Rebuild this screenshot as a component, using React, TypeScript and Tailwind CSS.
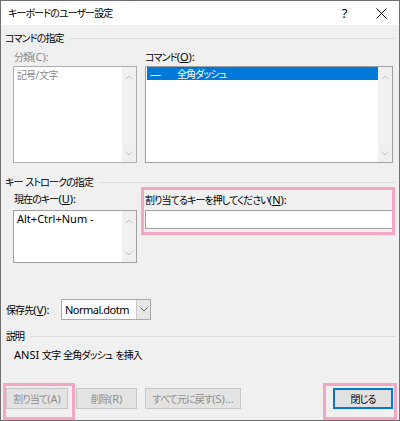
import React from "react";

const FONT = '"Noto Sans", "Noto Sans CJK JP", sans-serif';

function T({ s }: { s: string }) {
  const parts = s.split(/([\u3000-\u30ff\u4e00-\u9fff\uff00-\uffef]+)/);
  return (
    <>
      {parts.map((p, i) =>
        p === "" ? null : /[\u3000-\u30ff\u4e00-\u9fff\uff00-\uffef]/.test(p) ? (
          <span key={i} className="text-[10px] tracking-[-0.9px]">
            {p}
          </span>
        ) : (
          <span key={i}>{p}</span>
        )
      )}
    </>
  );
}

function Chevron({ dir, color = "#c2c2c2" }: { dir: "up" | "down"; color?: string }) {
  return (
    <svg width="8" height="5" viewBox="0 0 8 5" className="block">
      {dir === "up" ? (
        <polyline points="0.5,4.5 4,1 7.5,4.5" fill="none" stroke={color} strokeWidth="1" />
      ) : (
        <polyline points="0.5,0.5 4,4 7.5,0.5" fill="none" stroke={color} strokeWidth="1" />
      )}
    </svg>
  );
}

function ScrollBar() {
  return (
    <div className="w-[14px] bg-[#f0f0f0] flex flex-col items-center justify-between pt-[8px] pb-[6px]">
      <Chevron dir="up" />
      <Chevron dir="down" />
    </div>
  );
}

function GroupHeader({ label, className = "" }: { label: string; className?: string }) {
  return (
    <div className={"flex items-center h-[16px] " + className}>
      <span className="whitespace-nowrap">
        <T s={label} />
      </span>
      <div className="flex-1 h-px bg-[#dcdcdc] ml-[6px]" />
    </div>
  );
}

function Btn({ label, w, def = false }: { label: string; w: string; def?: boolean }) {
  return (
    <div
      className={
        "h-[21px] flex items-center justify-center whitespace-nowrap " +
        w +
        (def
          ? " bg-[#e1e1e1] border-2 border-[#0078d7] text-black"
          : " bg-[#e3e3e3] border border-[#c6c6c6] text-[#8f8f8f]")
      }
    >
      <T s={label} />
    </div>
  );
}

export default function App() {
  return (
    <div
      className="relative w-[400px] h-[421px] border border-[#707070] bg-[#f0f0f0] flex flex-col overflow-hidden text-[11px] leading-[16px] text-black [font-feature-settings:'palt']"
      style={{ fontFamily: FONT }}
    >
      {/* Title bar */}
      <div className="h-[24px] bg-white flex items-center shrink-0">
        <span className="pl-[7px]">
          <T s="キーボードのユーザー設定" />
        </span>
        <div className="ml-auto flex h-full">
          <div className="w-[37px] flex items-center justify-center text-[13px]">?</div>
          <div className="w-[36px] flex items-center justify-center">
            <svg width="11" height="11" viewBox="0 0 11 11">
              <line x1="0.5" y1="0.5" x2="10.5" y2="10.5" stroke="#000" strokeWidth="1" />
              <line x1="10.5" y1="0.5" x2="0.5" y2="10.5" stroke="#000" strokeWidth="1" />
            </svg>
          </div>
        </div>
      </div>

      {/* Body */}
      <div className="flex-1 flex flex-col px-[4px]">
        <GroupHeader label="コマンドの指定" className="mt-[5px]" />

        <div className="flex gap-[8px] ml-[8px] mt-[3px]">
          <div className="w-[124px] flex flex-col">
            <span className="text-[#8a8a8a] pl-[1px]">
              <T s="分類(C):" />
            </span>
            <div className="mt-[1px] h-[97px] border border-[#adadad] bg-white flex">
              <div className="flex-1 pl-[3px] pt-[1px] text-[#8a8a8a] leading-[14px]">
                <T s="記号/文字" />
              </div>
              <ScrollBar />
            </div>
          </div>
          <div className="w-[248px] flex flex-col">
            <span>
              <T s="コマンド" />(<span className="underline">O</span>):
            </span>
            <div className="mt-[1px] h-[97px] border border-[#a0a0a0] bg-white flex">
              <div className="flex-1 pl-[1px]">
                <div className="h-[13px] bg-[#0078d7] text-white flex items-center leading-[13px]">
                  <span className="pl-[3px] w-[30px]">—</span>
                  <span>
                    <T s="全角ダッシュ" />
                  </span>
                </div>
              </div>
              <ScrollBar />
            </div>
          </div>
        </div>

        <GroupHeader label="キー ストロークの指定" className="mt-[11px]" />

        <div className="flex gap-[8px] ml-[8px] mt-[1px]">
          <div className="w-[124px] flex flex-col">
            <span className="pl-[1px]">
              <T s="現在のキー" />(<span className="underline">U</span>):
            </span>
            <div className="mt-[3px] h-[53px] border border-[#a0a0a0] bg-white flex">
              <div className="flex-1 pl-[3px] pt-[1px] leading-[14px] whitespace-nowrap">Alt+Ctrl+Num -</div>
              <ScrollBar />
            </div>
          </div>
          <div className="w-[248px] flex flex-col">
            <span className="mt-[1px]">
              <T s="割り当てるキーを押してください" />(<span className="underline">N</span>):
            </span>
            <div className="mt-[2px] h-[19px] border border-[#a0a0a0] bg-white" />
          </div>
        </div>

        <div className="flex items-center mt-[36px]">
          <span className="w-[56px] pl-[1px] whitespace-nowrap">
            <T s="保存先" />(<span className="underline">V</span>):
          </span>
          <div className="w-[90px] h-[21px] border border-[#a9a9a9] bg-white flex">
            <div className="flex-1 flex items-center pl-[3px] tracking-[-0.5px]">Normal.dotm</div>
            <div className="w-[14px] border-l border-[#c8c8c8] bg-[#e6e6e6] flex items-center justify-center">
              <Chevron dir="down" color="#606060" />
            </div>
          </div>
        </div>

        <GroupHeader label="説明" className="mt-[8px] pl-[1px]" />

        <div className="mt-[3px] ml-[9px]">
          <T s="ANSI 文字 全角ダッシュ を挿入" />
        </div>

        <div className="flex mt-[25px] ml-[1px] mr-[2px]">
          <Btn label="割り当て(A)" w="w-[62px]" />
          <div className="ml-[8px]">
            <Btn label="削除(R)" w="w-[61px]" />
          </div>
          <div className="ml-[8px]">
            <Btn label="すべて元に戻す(S)..." w="w-[96px]" />
          </div>
          <div className="ml-auto">
            <Btn label="閉じる" w="w-[60px]" def />
          </div>
        </div>
      </div>

      {/* Annotation highlight boxes */}
      <div className="absolute left-[140px] top-[186px] w-[254px] h-[48px] border-[3px] border-[#f4a6c4] pointer-events-none" />
      <div className="absolute left-[2px] top-[382px] w-[72px] h-[37px] border-[3px] border-[#f4a6c4] pointer-events-none" />
      <div className="absolute left-[322px] top-[382px] w-[74px] h-[37px] border-[3px] border-[#f4a6c4] pointer-events-none" />
    </div>
  );
}
